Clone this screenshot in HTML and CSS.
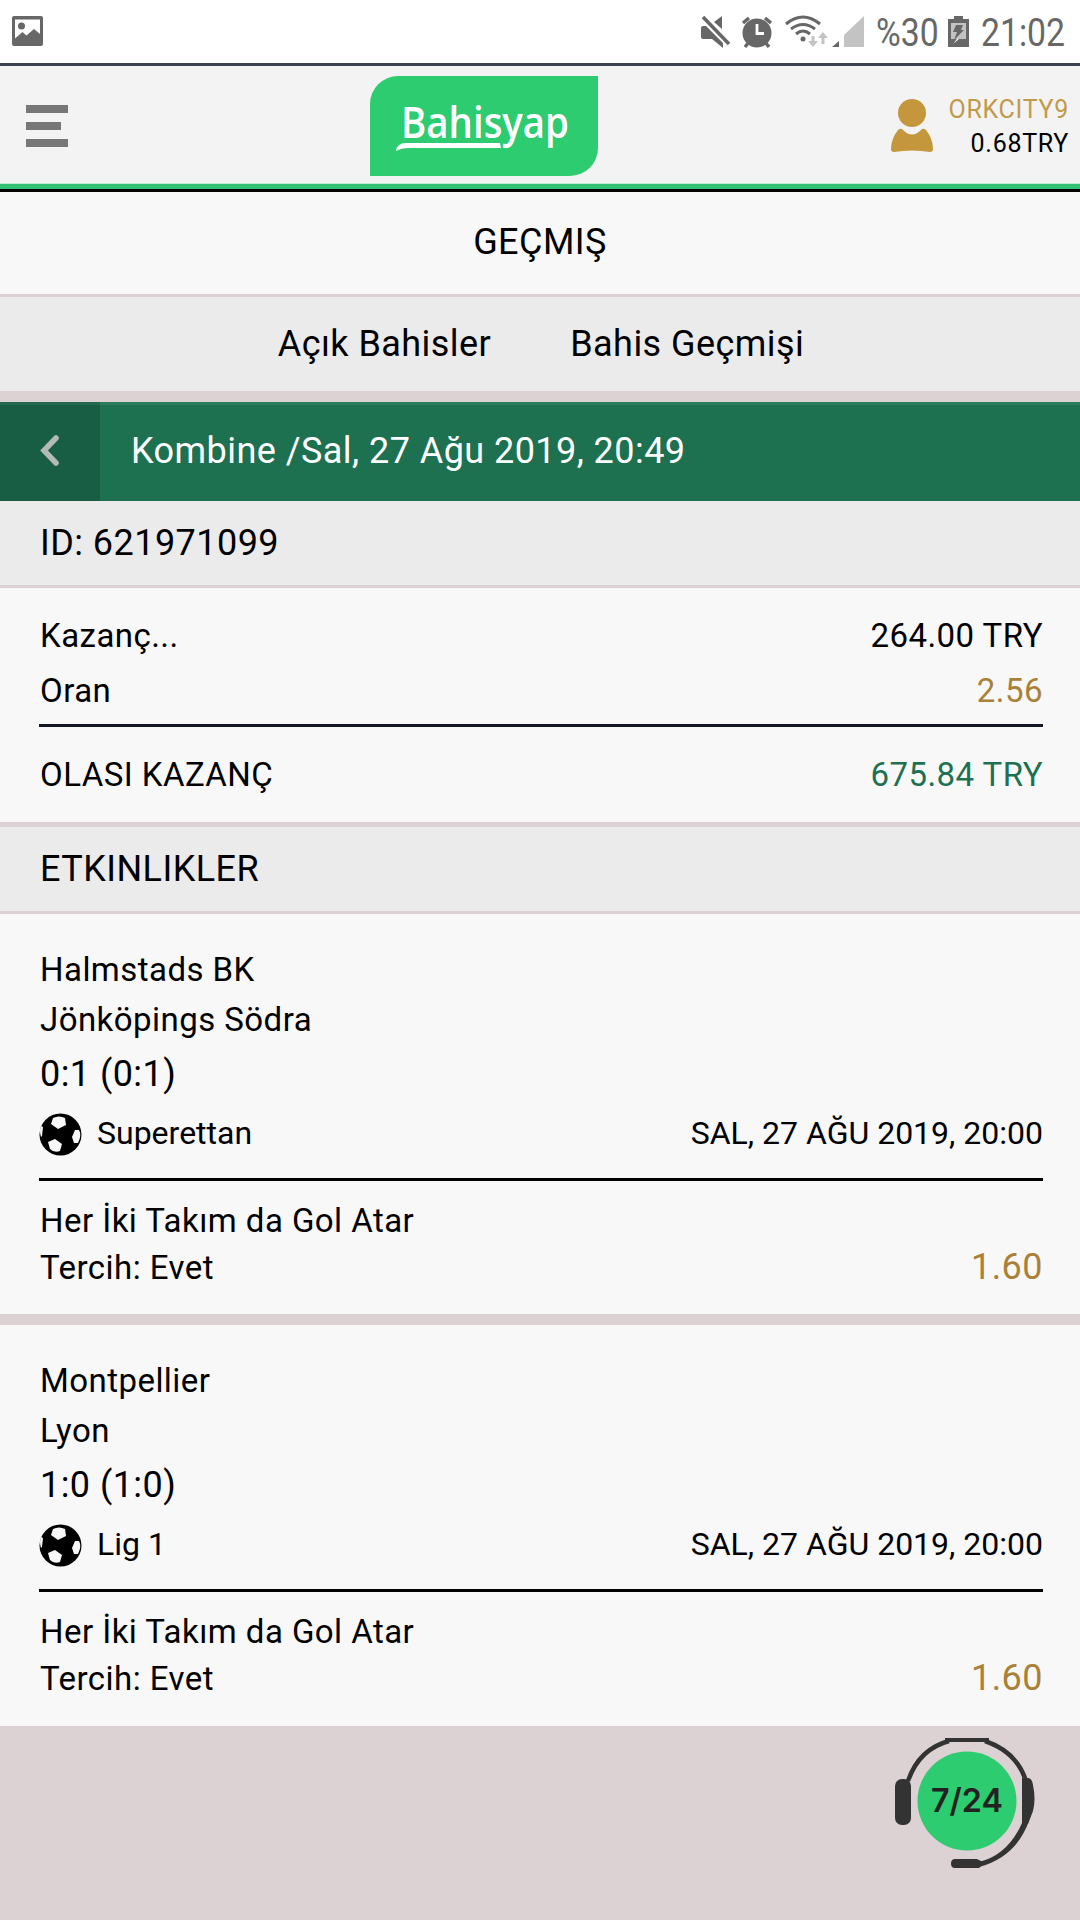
FILE: index.html
```html
<!DOCTYPE html>
<html lang="tr">
<head>
  <meta charset="UTF-8">
  <title>Bahisyap</title>
  <link rel="stylesheet" href="styles.css">
</head>
<body>
  <!-- phone status bar -->
  <div class="status-bar">
    <svg class="ic-picture" width="31" height="30" viewBox="0 0 31 30">
      <path fill="#676767" fill-rule="evenodd" d="M2 0h27a2 2 0 0 1 2 2v26a2 2 0 0 1-2 2H2a2 2 0 0 1-2-2V2a2 2 0 0 1 2-2zM3 3.500V22.500L10.500 16l4 3.500 7.500-6.500 6 5V3.500z"/>
      <circle cx="9.500" cy="10" r="3.500" fill="#676767"/>
    </svg>
    <svg class="ic-status" width="166" height="34" viewBox="0 0 166 34">
      <!-- muted speaker -->
      <g fill="#676767">
        <path d="M2 11h3l17 17v5L11 24H2q-2 0-2-2V13q0-2 2-2zM21 1v13l-8-7z"/>
        <path d="M2 2l26 27" stroke="#676767" stroke-width="3.500"/>
      </g>
      <!-- alarm clock -->
      <circle cx="56" cy="18" r="14.500" fill="#676767"/>
      <path d="M42 8l6-5M70 8l-6-5M48 27l-4 5M64 27l4 5" stroke="#676767" stroke-width="3.500"/>
      <path d="M56 9v9.500h7" fill="none" stroke="#fff" stroke-width="2.800"/>
      <!-- wifi -->
      <g fill="none" stroke="#676767" stroke-width="3">
        <path d="M85 9q17-14 34 0"/>
        <path d="M90 14q12-9 24 0"/>
        <path d="M95 19q7-6 14 0"/>
      </g>
      <circle cx="102" cy="24" r="2.500" fill="#676767"/>
      <path d="M112 21v8M122 29v-8" stroke="#c3c3c3" stroke-width="3"/>
      <path fill="#c3c3c3" d="M107 26h10l-5 6zM117 23h10l-5-6z"/>
      <!-- signal -->
      <path fill="#c3c3c3" d="M163 1v31h-20V20z"/>
      <path fill="#676767" d="M138 26v6h-7z"/>
    </svg>
    <span class="status-text percent">%30</span>
    <svg class="ic-battery" width="22" height="33" viewBox="0 0 22 33">
      <path fill="#676767" d="M6 1h9v3h6v28H0V4h6z"/>
      <path fill="#c3c3c3" d="M3 8h15v16H3z"/>
      <path fill="#676767" d="M8 10h7l-2 5h3L6 25l3-8H5z"/>
      <path fill="#fff" d="M9 24h2l-6 5z"/>
    </svg>
    <span class="status-text clock">21:02</span>
  </div>

  <header class="header">
    <div class="menu">
      <div class="menu-line"></div>
      <div class="menu-line short"></div>
      <div class="menu-line"></div>
    </div>
    <div class="logo">
      <svg width="228" height="100" viewBox="0 0 228 100">
        <text class="logo-text" x="31" y="61.500" textLength="168" lengthAdjust="spacingAndGlyphs">Bahisyap</text>
        <path fill="#fff" d="M26 75Q27 67 36 67H130L131 72H39Q31 72 26 75z"/>
      </svg>
    </div>
    <div class="user">
      <svg width="42" height="53" viewBox="0 0 42 53">
        <circle cx="21" cy="14" r="14" fill="#c4973d"/>
        <path fill="#c4973d" d="M11 30Q21 41 31 30Q33 29 35 31Q42 40 42 50Q42 53 39 53Q21 50 3 53Q0 53 0 50Q0 40 7 31Q9 29 11 30z"/>
      </svg>
      <div class="user-info">
        <div class="user-name">ORKCITY9</div>
        <div class="user-balance">0.68TRY</div>
      </div>
    </div>
  </header>

  <h1 class="title">GEÇMIŞ</h1>
  <nav class="tabs">
    <a>Açık Bahisler</a>
    <a>Bahis Geçmişi</a>
  </nav>

  <div class="bet-head">
    <div class="back">
      <svg width="20" height="32" viewBox="0 0 20 32">
        <path d="M16 3L4 15.500L16 28" fill="none" stroke="#b5b9b7" stroke-width="5.500" stroke-linecap="round"/>
      </svg>
    </div>
    <div class="bet-name">Kombine /Sal, 27 Ağu 2019, 20:49</div>
  </div>

  <div class="bar">ID: 621971099</div>
  <section class="summary">
    <div class="row"><span>Kazanç...</span><span>264.00 TRY</span></div>
    <div class="row"><span>Oran</span><span class="gold">2.56</span></div>
    <div class="row total"><span>OLASI KAZANÇ</span><span class="green">675.84 TRY</span></div>
  </section>

  <div class="bar">ETKINLIKLER</div>
  <section class="event">
    <div class="team">Halmstads BK</div>
    <div class="team">Jönköpings Södra</div>
    <div class="score">0:1 (0:1)</div>
    <div class="league">
      <svg width="43" height="43" viewBox="0 0 43 43">
        <circle cx="21.500" cy="21.500" r="21" fill="#000"/>
        <path fill="#f8f8f8" d="M14 5Q20 2 26 5L27 12 19 16 12 11zM16 26L23 31 21 38Q15 40 11 36L9 29zM36 17L40 17Q43 22 39 30L35 30 33 24zM2 13L4 14 3 23 2 24Q0 18 2 13z"/>
      </svg>
      <span>Superettan</span>
      <span class="date">SAL, 27 AĞU 2019, 20:00</span>
    </div>
    <div class="pick">
      <div>
        <div>Her İki Takım da Gol Atar</div>
        <div>Tercih: Evet</div>
      </div>
      <div class="odd">1.60</div>
    </div>
  </section>

  <section class="event">
    <div class="team">Montpellier</div>
    <div class="team">Lyon</div>
    <div class="score">1:0 (1:0)</div>
    <div class="league">
      <svg width="43" height="43" viewBox="0 0 43 43">
        <circle cx="21.500" cy="21.500" r="21" fill="#000"/>
        <path fill="#f8f8f8" d="M14 5Q20 2 26 5L27 12 19 16 12 11zM16 26L23 31 21 38Q15 40 11 36L9 29zM36 17L40 17Q43 22 39 30L35 30 33 24zM2 13L4 14 3 23 2 24Q0 18 2 13z"/>
      </svg>
      <span>Lig 1</span>
      <span class="date">SAL, 27 AĞU 2019, 20:00</span>
    </div>
    <div class="pick">
      <div>
        <div>Her İki Takım da Gol Atar</div>
        <div>Tercih: Evet</div>
      </div>
      <div class="odd">1.60</div>
    </div>
  </section>

  <!-- support button -->
  <svg class="support" width="142" height="134" viewBox="0 0 142 134">
    <circle cx="72" cy="64" r="49.500" fill="#2ecc71"/>
    <path d="M13 44Q24 12 54 4" fill="none" stroke="#333" stroke-width="4.500"/>
    <path d="M90 4Q122 15 131 44" fill="none" stroke="#333" stroke-width="4.500"/>
    <path d="M50 1H94V5H50z" fill="#333"/>
    <path fill="#333" d="M127 86L134 84Q121 120 84 130V125Q113 118 127 86z"/>
    <rect x="0" y="42" width="16" height="46" rx="7" fill="#333"/>
    <path fill="#333" d="M127 41h6q4 0 5 7 3 14 0 26l-5 13h-6z"/>
    <path fill="#333" d="M60 122H82L90 126 84 131H60Q56 131 56 126.500T60 122z"/>
    <text class="support-text" x="36" y="74.500" textLength="72" lengthAdjust="spacingAndGlyphs">7/24</text>
  </svg>
</body>
</html>
```
FILE: styles.css
```css
* {
  box-sizing: border-box;
}

body {
  margin: 0;
  height: 1920px;
  background: #dcd2d3;
  font-family: Roboto, sans-serif;
  font-size: 33px;
  letter-spacing: 0.45px;
  color: #000;
  overflow: hidden;
  position: relative;
}

svg {
  display: block;
  flex: none;
  letter-spacing: 0;
}

.status-bar {
  display: flex;
  align-items: flex-start;
  height: 66px;
  padding: 0 14px 0 12px;
  background: #fff;
  border-bottom: 3px solid #3d404e;
}

.ic-picture {
  margin-top: 16px;
}

.ic-status {
  margin: 15px 9px 0 auto;
}

.ic-battery {
  margin: 15px 11px 0 10px;
}

.status-text {
  font-size: 39px;
  line-height: 67px;
  letter-spacing: 0;
  color: #676767;
  white-space: nowrap;
  transform-origin: left center;
  transform: scaleX(0.865);
}

.percent {
  width: 62px;
}

.clock {
  width: 85px;
}

.header {
  display: grid;
  grid-template-columns: 344px 228px 1fr;
  height: 126px;
  padding: 10px 11px 0 26px;
  background: #f3f3f3;
  border-bottom: 3px solid #000;
  box-shadow: inset 0 -5px 0 #33c274, inset 0 -6px 0 #c0ecd2;
}

.menu {
  padding-top: 29px;
}

.menu-line {
  width: 42px;
  height: 8px;
  margin-bottom: 9px;
  background: #777;
}

.menu-line.short {
  width: 35px;
}

.logo {
  width: 228px;
  height: 100px;
  background: #2ecc71;
  border-radius: 28px 0 28px 0;
}

.logo-text {
  font: 600 43px "Open Sans", sans-serif;
  fill: #fff;
}

.user {
  display: flex;
  justify-content: flex-end;
  padding-top: 23px;
  gap: 16px;
}

.user-info {
  font-size: 25px;
  line-height: 34px;
  letter-spacing: 0.7px;
  margin-top: -6px;
  text-align: right;
}

.user-name {
  color: #c29a4b;
}

.title {
  margin: 0;
  height: 105px;
  background: #f8f8f8;
  border-bottom: 3px solid #dcd2d3;
  font-size: 36px;
  font-weight: 400;
  line-height: 100px;
  text-align: center;
}

.tabs {
  display: flex;
  justify-content: center;
  gap: 79px;
  height: 94px;
  margin-bottom: 11px;
  padding-left: 2px;
  background: #ebebeb;
  font-size: 36px;
  line-height: 94px;
}

.bet-head {
  display: flex;
  height: 99px;
  background: #1d7151;
  box-shadow: inset 0 3px 0 rgba(255,255,255,0.08);
  color: #fff;
  font-size: 36px;
  line-height: 99px;
}

.back {
  width: 100px;
  padding: 33px 0 0 40px;
  background: rgba(0,0,0,0.16);
}

.bet-name {
  padding-left: 31px;
}

.bar {
  height: 87px;
  padding-left: 40px;
  background: #ebebeb;
  border-bottom: 3px solid #dcd2d3;
  font-size: 36px;
  line-height: 84px;
}

.summary {
  height: 239px;
  padding: 20px 37px 0 39px;
  background: #f8f8f8;
  border-bottom: 5px solid #dcd2d3;
  text-indent: 1px;
}

.row {
  display: flex;
  justify-content: space-between;
  line-height: 55px;
}

.total {
  margin-top: 6px;
  padding-top: 20px;
  border-top: 3px solid #141824;
}

.gold,
.odd {
  color: #a98138;
}

.green {
  color: #1d7151;
}

.event {
  height: 400px;
  margin-bottom: 11px;
  padding: 31px 37px 0 39px;
  background: #f8f8f8;
  text-indent: 1px;
}

.event:nth-of-type(3) {
  height: 401px;
}

.team {
  line-height: 50px;
}

.score {
  font-size: 36px;
  line-height: 58px;
}

.league {
  display: flex;
  align-items: center;
  height: 78px;
  padding-bottom: 13px;
  border-bottom: 3px solid #000;
  font-size: 32px;
  line-height: 44px;
  letter-spacing: 0;
}

.league span {
  margin: -2px 0 0 14px;
}

.league .date {
  margin-left: auto;
}

.pick {
  display: flex;
  justify-content: space-between;
  align-items: flex-end;
  padding-top: 16px;
  line-height: 47px;
}

.odd {
  font-size: 36px;
}

/* floats over the page */
.support {
  position: absolute;
  left: 895px;
  top: 1737px;
}

.support-text {
  font: 600 33px Inter, sans-serif;
  fill: #222;
}
```
